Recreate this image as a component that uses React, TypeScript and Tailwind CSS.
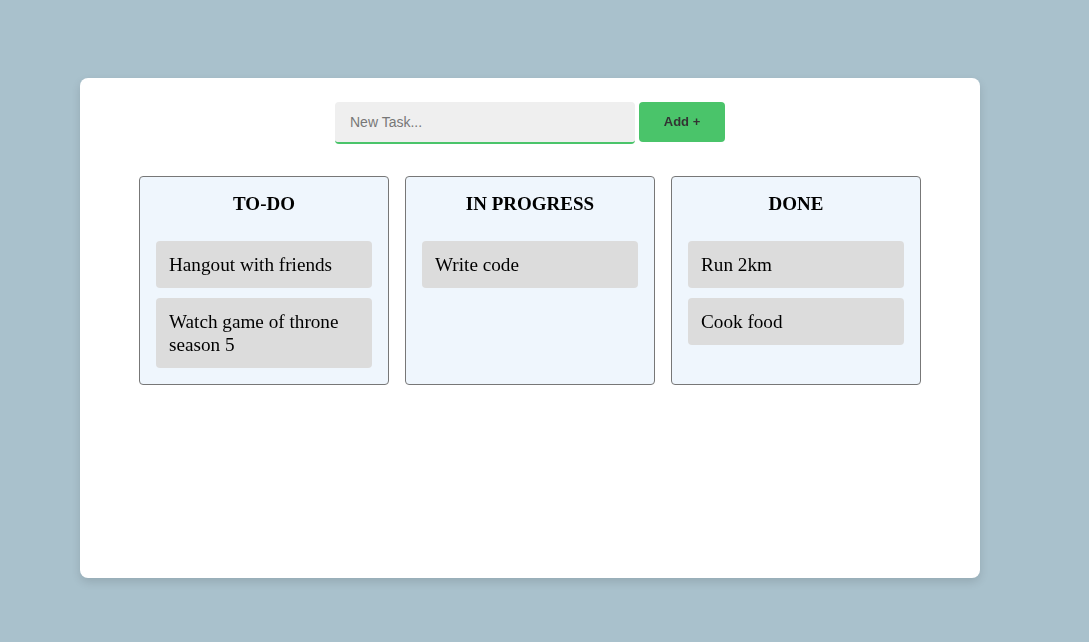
import { useState } from "react";

type Status = "todo" | "progress" | "done";

interface Task {
  id: number;
  text: string;
  status: Status;
}

const columns: { key: Status; title: string }[] = [
  { key: "todo", title: "TO-DO" },
  { key: "progress", title: "IN PROGRESS" },
  { key: "done", title: "DONE" },
];

export default function App() {
  const [value, setValue] = useState("");
  const [tasks, setTasks] = useState<Task[]>([
    { id: 1, text: "Hangout with friends", status: "todo" },
    { id: 2, text: "Watch game of throne season 5", status: "todo" },
    { id: 3, text: "Write code", status: "progress" },
    { id: 4, text: "Run 2km", status: "done" },
    { id: 5, text: "Cook food", status: "done" },
  ]);

  const addTask = () => {
    if (!value.trim()) return;
    setTasks([...tasks, { id: Date.now(), text: value.trim(), status: "todo" }]);
    setValue("");
  };

  return (
    <div className="min-h-screen bg-[#a9c1cc] pl-[80px] pt-[78px] font-['Liberation_Serif',serif]">
      <div className="flex h-[500px] w-[900px] flex-col items-center rounded-lg bg-white pt-6 shadow-[0_4px_10px_rgba(0,0,0,0.12)]">
        {/* Input row */}
        <div className="flex items-start gap-1">
          <input
            autoFocus
            value={value}
            onChange={(e) => setValue(e.target.value)}
            placeholder="New Task..."
            className="h-[42px] w-[300px] rounded-[4px] border-b-2 border-[#4ac46a] bg-[#efefef] px-[15px] font-['Liberation_Sans',Arial,sans-serif] text-[14px] text-[#333] placeholder:text-[#777] outline-none"
          />
          <button
            onClick={addTask}
            className="h-10 w-[86px] rounded-[4px] bg-[#4ac46a] font-['Liberation_Sans',Arial,sans-serif] text-[13px] font-bold text-[#333]"
          >
            Add +
          </button>
        </div>

        {/* Columns */}
        <div className="mt-8 grid grid-cols-[250px_250px_250px] gap-4">
          {columns.map((col) => (
            <div
              key={col.key}
              className="rounded-[4px] border border-[#777] bg-[#eff6fd] px-4 pb-4 pt-4"
            >
              <h3 className="mb-[26px] text-center text-[19px] leading-[22px] font-bold text-black">
                {col.title}
              </h3>
              <div className="flex flex-col gap-[10px]">
                {tasks
                  .filter((t) => t.status === col.key)
                  .map((t) => (
                    <div
                      key={t.id}
                      className="rounded-[4px] bg-[#dcdcdc] px-[13px] py-3 text-[19.2px] leading-[23px] text-black"
                    >
                      {t.text}
                    </div>
                  ))}
              </div>
            </div>
          ))}
        </div>
      </div>
    </div>
  );
}
